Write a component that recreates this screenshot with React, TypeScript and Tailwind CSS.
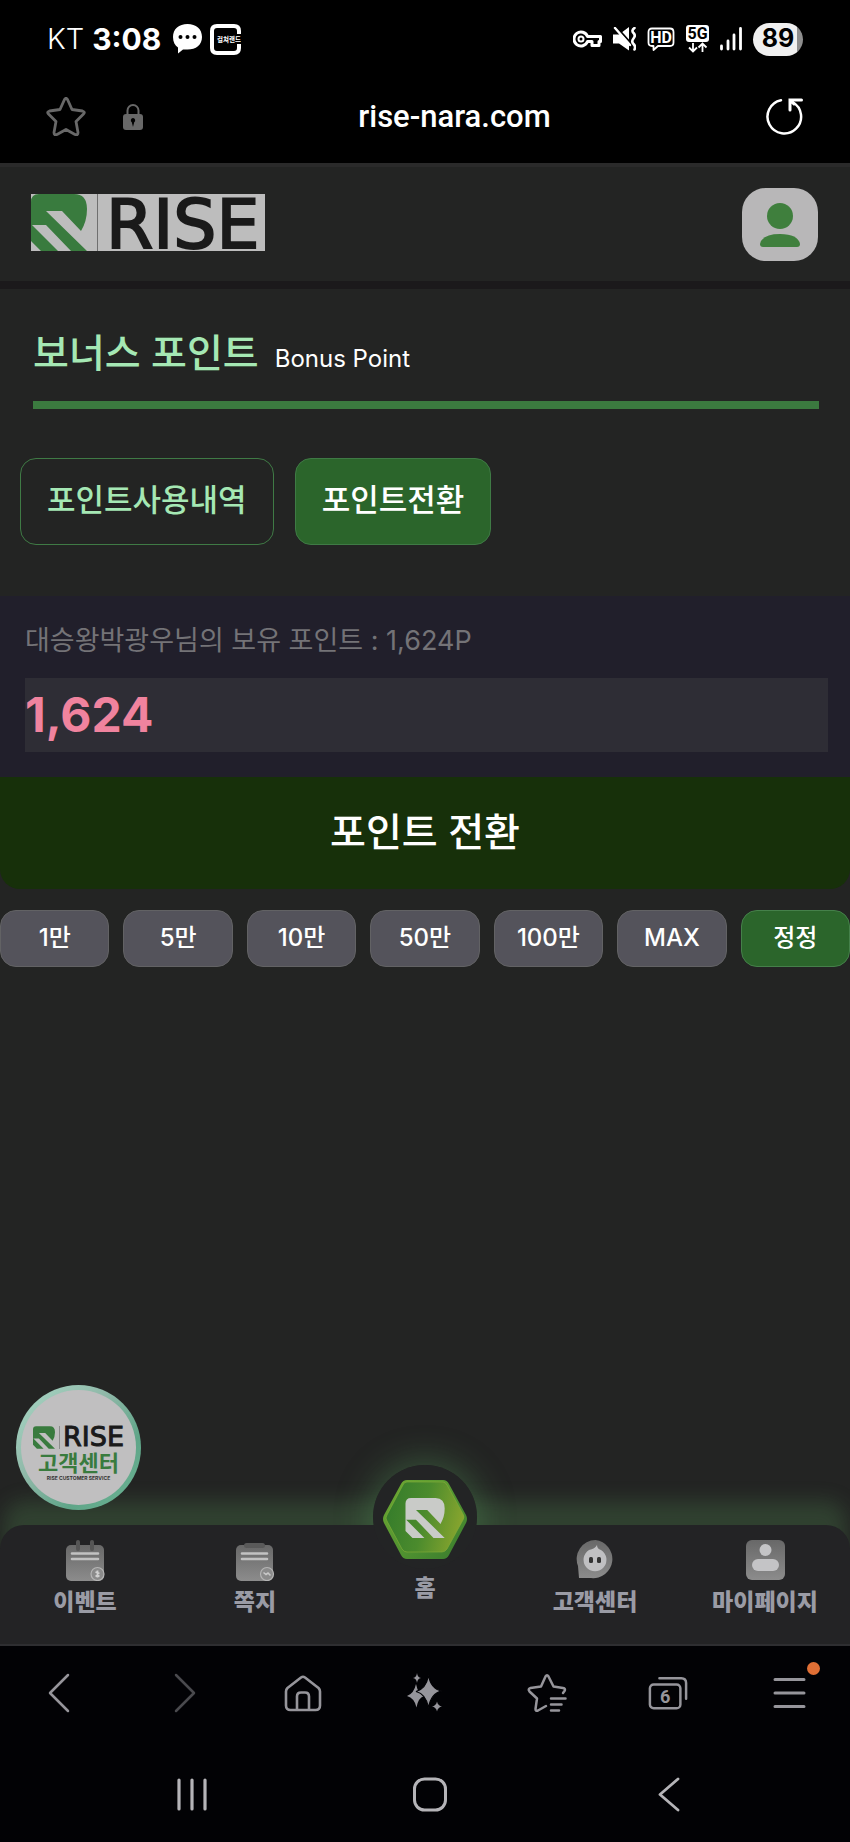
import type { ReactNode } from "react";

const KR = "font-['Inter','Noto_Sans_CJK_KR',sans-serif]";

function RiseMark({ className }: { className: string }) {
  return (
    <svg viewBox="0 0 56 57" className={className} fill="currentColor" aria-hidden="true">
      <path d="M0 8Q0 0 8 0H43Q56 0 56 15Q56 27 50 37L31 17H15L56 57H40L15 31H1L27 57H10L0 47Z" />
    </svg>
  );
}

function StatusBar() {
  return (
    <div className="flex h-[78px] items-center justify-between bg-black pl-[47px] pr-[47px] text-white">
      <div className="flex items-center">
        <span className="font-['Inter',sans-serif] text-[29px] font-light leading-8">KT</span>
        <span className="ml-2 mr-3 font-['Inter',sans-serif] text-[30px] font-bold leading-8">3:08</span>
        <svg viewBox="0 0 29 30" className="mr-2 h-[30px] w-[29px]" aria-hidden="true">
          <path d="M14.500 0C23 0 29 5 29 13S23 25.500 14.500 25.500H10L5 29.500V23.500C2 21.500 0 18 0 13C0 5 6 0 14.500 0Z" fill="#fff" />
          <circle cx="7.500" cy="13" r="2" fill="#000" />
          <circle cx="14.500" cy="13" r="2" fill="#000" />
          <circle cx="21.500" cy="13" r="2" fill="#000" />
        </svg>
        <svg viewBox="0 0 31 31" className="h-[31px] w-[31px]" aria-hidden="true">
          <path d="M29 10V7Q29 2 24 2H7Q2 2 2 7V24Q2 29 7 29H24Q29 29 29 24V20" fill="none" stroke="#fff" strokeWidth="4" />
          <text x="7" y="18" fill="#fff" fontSize="6.500" fontWeight="700" fontFamily="Noto Sans CJK KR, sans-serif">컬쳐랜드</text>
        </svg>
      </div>
      <div className="flex items-center gap-[11px]">
        <svg viewBox="0 0 29 18" className="h-[18px] w-[29px]" fill="none" stroke="#fff" strokeWidth="3" aria-hidden="true">
          <path d="M14.500 6.500A7 7 0 1 0 14.500 11.500H19V15.500H26V11.500H27.500V6.500Z" strokeLinejoin="round" />
          <circle cx="8" cy="9" r="2.500" strokeWidth="2" />
        </svg>
        <svg viewBox="0 0 23 24" className="h-6 w-[23px]" aria-hidden="true">
          <path d="M0 7.500H6L16 0V23.500L6 16.500H0Z" fill="#fff" />
          <path d="M3.500 0L18.500 17" stroke="#000" strokeWidth="2" />
          <path d="M2 1L17 18" stroke="#fff" strokeWidth="2.400" strokeLinecap="round" />
          <path d="M21.500 1Q18 3.500 20.500 6T20.500 11.500T20.500 17T21.500 22.500" fill="none" stroke="#fff" strokeWidth="2.600" strokeLinecap="round" />
        </svg>
        <svg viewBox="0 0 28 25" className="h-[25px] w-7" aria-hidden="true">
          <path d="M5 1.500H23Q26.500 1.500 26.500 5V15.500Q26.500 19 23 19H11L6.500 23V19H5Q1.500 19 1.500 15.500V5Q1.500 1.500 5 1.500Z" fill="none" stroke="#fff" strokeWidth="1.800" strokeLinejoin="round" />
          <text x="14" y="16" textAnchor="middle" fill="#fff" fontSize="16" fontWeight="700" fontFamily="Roboto, sans-serif">HD</text>
        </svg>
        <svg viewBox="0 0 23 28" className="h-7 w-[23px]" aria-hidden="true">
          <rect width="23" height="17" rx="3" fill="#fff" />
          <text x="11.500" y="14" textAnchor="middle" fill="#000" fontSize="16" fontWeight="700" fontFamily="Roboto, sans-serif">5G</text>
          <path d="M7 18V26M3 22.500L7 26.500L11 22.500M16.500 27V19M12.500 22.500L16.500 18.500L20.500 22.500" fill="none" stroke="#fff" strokeWidth="1.800" />
        </svg>
        <svg viewBox="0 0 22 24" className="h-6 w-[22px]" stroke="#fff" strokeWidth="2.800" strokeLinecap="round" aria-hidden="true">
          <path d="M1.500 19V22M8 14V22M14 8V22M20.500 1.500V22" />
        </svg>
        <div className="flex h-[33px] w-[50px] items-center justify-center rounded-full bg-[linear-gradient(to_right,#f0f0f0_89%,#8e8e8e_89%)] font-['Inter',sans-serif] text-[25px] font-bold text-black">
          89
        </div>
      </div>
    </div>
  );
}

function AddressBar() {
  return (
    <div className="flex h-[85px] items-center justify-between bg-black pl-[46px] pr-[47px] pb-2">
      <div className="flex items-center gap-[37px]">
        <button type="button" aria-label="북마크">
          <svg viewBox="0 0 40 39" className="h-[39px] w-10" fill="none" stroke="#686868" strokeWidth="2.800" strokeLinejoin="round" aria-hidden="true">
            <path d="M18.500 2.500Q20 0 21.500 2.500L26 12.500L36.500 14Q39.500 15 37.500 17L30 24.500L32 35.500Q32 38.500 29 37.500L20 32.500L11 37.500Q8 38.500 8 35.500L10 24.500L2.500 17Q0.500 15 3.500 14L14 12.500Z" />
          </svg>
        </button>
        <svg viewBox="0 0 20 26" className="h-[26px] w-5" aria-hidden="true">
          <path d="M4.500 11V6.500A5.500 5.500 0 0 1 15.500 6.500V11" fill="none" stroke="#686868" strokeWidth="2" />
          <rect y="10" width="20" height="16" rx="3" fill="#686868" />
          <path d="M10 14a2.300 2.300 0 0 1 1.200 4.200L10 23L8.800 18.200A2.300 2.300 0 0 1 10 14Z" fill="#000" />
        </svg>
      </div>
      <span className="font-['Roboto',sans-serif] text-[31px] font-medium leading-9 text-white">rise-nara.com</span>
      <button type="button" aria-label="새로고침">
        <svg viewBox="0 0 37 37" className="h-[37px] w-[37px]" fill="none" stroke="#fff" strokeWidth="2.500" strokeLinecap="round" aria-hidden="true">
          <path d="M15 2.200A16.800 16.800 0 1 0 26.500 4" />
          <path d="M24 12V2H35.500M24.500 2.500L28 6" strokeWidth="3" />
        </svg>
      </button>
    </div>
  );
}

function SiteHeader() {
  return (
    <header className="flex items-start justify-between border-y border-t-4 border-b-8 border-t-[#2a2a2a] border-b-[#1b191b] pt-[21px] pb-5 pl-[31px] pr-8">
      <a href="#home" aria-label="RISE" className="mt-[6px] flex h-[57px] w-[234px] bg-[#bdbdbd]">
        <RiseMark className="h-[57px] w-14 shrink-0 text-[#397b3e]" />
        <span className="ml-[10px] mr-2 w-px shrink-0 bg-[#6f6f6f]" />
        <span className="font-['DejaVu_Sans',sans-serif] text-[68px] leading-[62px] text-[#1a1a1a] [-webkit-text-stroke:2px_#1a1a1a]">RISE</span>
      </a>
      <button type="button" aria-label="내 계정" className="flex h-[73px] w-[76px] items-center justify-center rounded-3xl bg-[#b8b7b8]">
        <svg viewBox="0 0 40 46" className="h-[46px] w-10" fill="#3f7f3d" aria-hidden="true">
          <circle cx="20" cy="14" r="13" />
          <path d="M3 45Q0 45 0 42Q2 32 20 32T40 42Q40 45 37 45Z" />
        </svg>
      </button>
    </header>
  );
}

const amounts = ["1만", "5만", "10만", "50만", "100만", "MAX"];

function PointForm() {
  return (
    <form onSubmit={(e) => e.preventDefault()}>
      <div className="bg-[#211f2b] pl-[25px] pr-[22px] pt-[25px] pb-[25px]">
        <label htmlFor="points" className="block text-[27px] leading-10 text-[#747377]">
          대승왕박광우님의 보유 포인트 : 1,624P
        </label>
        <input
          id="points"
          type="text"
          inputMode="numeric"
          defaultValue="1,624"
          className="mt-[17px] block h-[74px] w-full bg-[#2e2d35] text-[48px] font-bold leading-[74px] text-[#f0839e] outline-none"
        />
      </div>
      <button type="submit" className="block h-28 w-full rounded-b-[20px] bg-[#17300a] pb-[2px] text-[39px] font-medium text-white">
        포인트 전환
      </button>
      <div className="mt-[21px] grid grid-cols-7 gap-[14px] text-[24px] font-medium text-white">
        {amounts.map((a) => (
          <button key={a} type="button" className="h-[57px] rounded-2xl border border-[#626264] bg-[#54535b] pb-px">
            {a}
          </button>
        ))}
        <button type="reset" className="h-[57px] rounded-2xl border border-[#45804a] bg-[#2b652b] pb-px">
          정정
        </button>
      </div>
    </form>
  );
}

function IconGradient({ id }: { id: string }) {
  return (
    <linearGradient id={id} x1="0" y1="0" x2="0" y2="1">
      <stop offset="0" stopColor="#686868" />
      <stop offset="1" stopColor="#8c8c8c" />
    </linearGradient>
  );
}

function EventIcon() {
  return (
    <svg viewBox="0 0 39 41" className="h-[41px] w-[39px]" aria-hidden="true">
      <defs><IconGradient id="ev" /></defs>
      <rect y="5" width="38" height="36" rx="5" fill="url(#ev)" />
      <rect x="10" width="4" height="11" rx="2" fill="#555" />
      <rect x="24" width="4" height="11" rx="2" fill="#555" />
      <path d="M6 13.500H32M6 19H32" stroke="#c2c2c2" strokeWidth="2.600" strokeLinecap="round" />
      <circle cx="31.500" cy="34" r="6.500" fill="#8b8b8b" stroke="#b5b5b5" strokeWidth="1.200" />
      <path d="M31.500 30.500V37.500M29.500 32L33.500 33.500M29.500 36H33.500" stroke="#d0d0d0" strokeWidth="1.800" />
    </svg>
  );
}

function NoteIcon() {
  return (
    <svg viewBox="0 0 39 41" className="h-[41px] w-[39px]" aria-hidden="true">
      <defs><IconGradient id="nt" /></defs>
      <rect y="5" width="37" height="36" rx="5" fill="url(#nt)" />
      <rect x="8" y="3" width="21" height="5" rx="2.500" fill="#5a5a5a" />
      <path d="M6 13.500H31M6 19H31" stroke="#c2c2c2" strokeWidth="2.600" strokeLinecap="round" />
      <circle cx="31" cy="34" r="6.500" fill="#8b8b8b" stroke="#b5b5b5" strokeWidth="1.200" />
      <path d="M27.500 32.500L30 34.500L32 33L34.500 35.500" fill="none" stroke="#c8c8c8" strokeWidth="1.600" />
    </svg>
  );
}

function SupportIcon() {
  return (
    <svg viewBox="0 0 39 41" className="h-[41px] w-[39px]" aria-hidden="true">
      <defs><IconGradient id="sp" /></defs>
      <path d="M19.500 0A19 19 0 1 1 15 38H3L2 26A19 19 0 0 1 19.500 0Z" fill="url(#sp)" />
      <path d="M21 5Q21 9 25 10A11.500 11.500 0 1 1 13 10Q19 9 21 5Z" fill="#c0c0c2" />
      <rect x="13" y="17" width="4" height="6" rx="1.500" fill="#333" />
      <rect x="21" y="17" width="4" height="6" rx="1.500" fill="#333" />
    </svg>
  );
}

function MyPageIcon() {
  return (
    <svg viewBox="0 0 39 41" className="h-[41px] w-[39px]" aria-hidden="true">
      <defs><IconGradient id="my" /></defs>
      <rect width="39" height="40" rx="6" fill="url(#my)" />
      <circle cx="19.500" cy="10" r="6" fill="#c4c4c6" />
      <rect x="6" y="19" width="27" height="12" rx="6" fill="#c4c4c6" />
    </svg>
  );
}

function NavItem({ label, children }: { label: string; children: ReactNode }) {
  return (
    <a href="#menu" className="flex flex-col items-center pt-[15px]">
      {children}
      <span className="mt-[5px] text-[23px] font-black leading-8">{label}</span>
    </a>
  );
}

function SupportBadge() {
  return (
    <a
      href="#support"
      className="absolute -top-[140px] left-4 z-10 flex h-[125px] w-[125px] rounded-full bg-[linear-gradient(135deg,#a9d8c6,#8fb8a8_40%,#5fa588_70%,#6db595)] p-[5px]"
    >
      <span className="flex h-full w-full flex-col items-center rounded-full bg-[#c0bfc0] pt-[33px]">
        <span className="flex h-7 items-center">
          <RiseMark className="h-[23px] w-[22px] text-[#397b3e]" />
          <span className="ml-1 mr-[3px] h-[23px] w-px bg-[#8d8d8d]" />
          <span className="font-['DejaVu_Sans',sans-serif] text-[27px] leading-7 text-[#1a1a1a] [-webkit-text-stroke:1px_#1a1a1a]">RISE</span>
        </span>
        <span className="text-[22px] font-bold leading-6 text-[#397b3e]">고객센터</span>
        <span className="text-[5px] font-bold leading-[7px] text-[#333]">RISE CUSTOMER SERVICE</span>
      </span>
    </a>
  );
}

function SiteNav() {
  return (
    <nav className="relative">
      <SupportBadge />
      <div className="absolute -top-[60px] left-1/2 h-[104px] w-[104px] -translate-x-1/2 rounded-full shadow-[0_0_32px_6px_rgba(90,160,95,0.35)]" />
      <div className="relative grid h-[121px] grid-cols-5 rounded-t-[24px] border-b-2 border-[#2e2e31] bg-[#232325] text-[#9a9ba5] shadow-[0_-28px_20px_-4px_rgba(90,160,90,0.24)]">
        <NavItem label="이벤트"><EventIcon /></NavItem>
        <NavItem label="쪽지"><NoteIcon /></NavItem>
        <a href="#home" className="relative flex flex-col items-center">
          <span className="absolute -top-[60px] left-1/2 flex h-[104px] w-[104px] -translate-x-1/2 items-center justify-center rounded-full bg-[#232425] pt-[6px]">
            <svg viewBox="0 0 84 80" className="h-20 w-[84px]" aria-hidden="true">
              <defs>
                <linearGradient id="hx" x1="0" y1="0.300" x2="1" y2="0.500">
                  <stop offset="0" stopColor="#357c2b" />
                  <stop offset="0.500" stopColor="#4b8b2d" />
                  <stop offset="1" stopColor="#88a52e" />
                </linearGradient>
                <linearGradient id="hb" x1="0" y1="0" x2="1" y2="1">
                  <stop offset="0" stopColor="#6faa32" />
                  <stop offset="0.600" stopColor="#4f9130" />
                  <stop offset="1" stopColor="#377a2e" />
                </linearGradient>
              </defs>
              <path d="M24 0H60Q64 0 66 4L83 35Q85 39 83 43L66 75Q64 79 60 79H24Q20 79 18 75L1 43Q-1 39 1 35L18 4Q20 0 24 0Z" fill="url(#hb)" />
              <path d="M24 2H60Q62 2 64 5L80 34Q82 37 80 40L64 69Q62 72 59 72H24Q21 72 19 69L4 41Q2 38 4 35L20 5Q21 2 24 2Z" fill="url(#hx)" stroke="#86ad38" strokeOpacity="0.600" />
              <g transform="translate(22.500 18) scale(0.700)" fill="#c9cbc8">
                <path d="M0 8Q0 0 8 0H43Q56 0 56 15Q56 27 50 37L31 17H15L56 57H40L15 31H1L27 57H10L0 47Z" />
              </g>
            </svg>
          </span>
          <span className="relative mt-[47px] text-[23px] font-black leading-8">홈</span>
        </a>
        <NavItem label="고객센터"><SupportIcon /></NavItem>
        <NavItem label="마이페이지"><MyPageIcon /></NavItem>
      </div>
    </nav>
  );
}

function ToolButton({ label, children }: { label: string; children: ReactNode }) {
  return (
    <button type="button" aria-label={label} className="flex h-10 w-10 items-center justify-center">
      {children}
    </button>
  );
}

function BrowserToolbar() {
  return (
    <div className="relative flex h-[94px] items-center justify-between bg-[#020205] px-10 text-[#96959b]">
      <ToolButton label="뒤로">
        <svg viewBox="0 0 40 40" className="h-10 w-10" fill="none" stroke="currentColor" strokeWidth="2.500" strokeLinecap="round" strokeLinejoin="round"><path d="M28 2L10 20L28 38" /></svg>
      </ToolButton>
      <ToolButton label="앞으로">
        <svg viewBox="0 0 40 40" className="h-10 w-10" fill="none" stroke="#4a4a4e" strokeWidth="2.500" strokeLinecap="round" strokeLinejoin="round"><path d="M14 2L32 20L14 38" /></svg>
      </ToolButton>
      <ToolButton label="홈">
        <svg viewBox="0 0 40 40" className="h-10 w-10" fill="none" stroke="currentColor" strokeWidth="2.600" strokeLinejoin="round">
          <path d="M18 4.500Q20 3 22 4.500L35.500 15Q37 16.500 37 18.500V32.500Q37 37 32.500 37H7.500Q3 37 3 32.500V18.500Q3 16.500 4.500 15Z" />
          <path d="M14 37V23.500Q14 19.500 18 19.500H22Q26 19.500 26 23.500V37" />
        </svg>
      </ToolButton>
      <ToolButton label="AI 도구">
        <svg viewBox="0 0 40 40" className="h-10 w-10" fill="currentColor">
          <path d="M11 11Q13 21 19 23Q13 25 11.500 34.500Q9.500 25 2 23Q9 20.500 11 11Z" />
          <path d="M23.500 2.500Q26 16 36.500 18Q26 20.500 23.500 34.500Q21 21 11 18.500Q21 16 23.500 2.500Z" stroke="#020205" strokeWidth="1.200" />
          <path d="M12 0Q12.500 4.500 16 5Q12.500 5.500 12 10Q11.500 5.500 8 5Q11.500 4.500 12 0Z" />
          <path d="M32 28.500Q32.800 32.700 37 33.500Q32.800 34.300 32 38.500Q31.200 34.300 27 33.500Q31.200 32.700 32 28.500Z" />
        </svg>
      </ToolButton>
      <ToolButton label="북마크 목록">
        <svg viewBox="0 0 40 40" className="h-10 w-10" fill="none" stroke="currentColor" strokeWidth="2.500" strokeLinecap="round" strokeLinejoin="round">
          <path d="M36 20L37.500 18Q39 15.500 36 15L26.500 13.500L21.500 3.500Q20 1 18.500 3.500L14 13.500L3.500 15Q0.500 16 2.500 18.500L10 25.500L8.500 36Q8.500 38.500 11 37.500L19 33" />
          <path d="M24 25.500H38.500M24 31.500H34.500M24 37.500H32" />
        </svg>
      </ToolButton>
      <ToolButton label="탭 6개">
        <svg viewBox="0 0 42 40" className="h-10 w-[42px]" fill="none" stroke="currentColor" strokeWidth="2.600" strokeLinecap="round">
          <rect x="2" y="11" width="32" height="25" rx="4" />
          <path d="M12 4.500H35Q40 4.500 40 9.500V26" />
          <text x="18" y="30.500" textAnchor="middle" stroke="none" fill="currentColor" fontSize="19" fontWeight="700" fontFamily="Roboto, sans-serif">6</text>
        </svg>
      </ToolButton>
      <div className="relative">
        <ToolButton label="메뉴">
          <svg viewBox="0 0 40 40" className="h-10 w-10" fill="none" stroke="currentColor" strokeWidth="3" strokeLinecap="round"><path d="M5 6.500H34M5 20H34M5 33.500H34" /></svg>
        </ToolButton>
        <span className="absolute -right-[10px] -top-[11px] h-[13px] w-[13px] rounded-full bg-[#e06f35]" />
      </div>
    </div>
  );
}

function SystemNav() {
  return (
    <div className="relative flex h-[102px] items-start justify-between bg-[#020205] pl-[172px] pr-[162px] pt-[34px] text-[#b5b4b8]">
      <ToolButton label="최근 앱">
        <svg viewBox="0 0 40 40" className="h-10 w-10" stroke="currentColor" strokeWidth="3.200" strokeLinecap="round"><path d="M7 6V35M20 6V35M33 6V35" /></svg>
      </ToolButton>
      <ToolButton label="홈 화면">
        <svg viewBox="0 0 40 40" className="h-10 w-10" fill="none" stroke="currentColor" strokeWidth="3"><rect x="4.500" y="5" width="31" height="31" rx="10" /></svg>
      </ToolButton>
      <ToolButton label="이전">
        <svg viewBox="0 0 40 40" className="h-10 w-10" fill="none" stroke="currentColor" strokeWidth="2.800" strokeLinecap="round" strokeLinejoin="round"><path d="M30 5L12 20.500L30 36" /></svg>
      </ToolButton>
    </div>
  );
}

export default function App() {
  return (
    <div className={`${KR} flex min-h-screen flex-col overflow-hidden bg-[#232423]`}>
      <StatusBar />
      <AddressBar />
      <SiteHeader />
      <main className="flex-1 pb-[140px]">
        <div className="ml-[33px] mr-[31px] flex items-baseline gap-4 border-b-8 border-[#3b7a3f] pt-9 pb-5">
          <h1 className="text-[39px] font-medium leading-[56px] text-[#a5e8b4]">보너스 포인트</h1>
          <p className="text-[24px] leading-8 text-white">Bonus Point</p>
        </div>
        <div className="mt-[49px] mb-[51px] flex gap-[21px] px-5 text-[31px] font-medium">
          <button type="button" className="h-[87px] rounded-2xl border border-[#3f7a45] px-[26px] pb-[2px] text-[#a5e8b4]">
            포인트사용내역
          </button>
          <button type="button" className="h-[87px] rounded-2xl border border-[#3f7a45] bg-[#2b652b] px-[26px] pb-[2px] text-white">
            포인트전환
          </button>
        </div>
        <PointForm />
      </main>
      <SiteNav />
      <BrowserToolbar />
      <SystemNav />
    </div>
  );
}
